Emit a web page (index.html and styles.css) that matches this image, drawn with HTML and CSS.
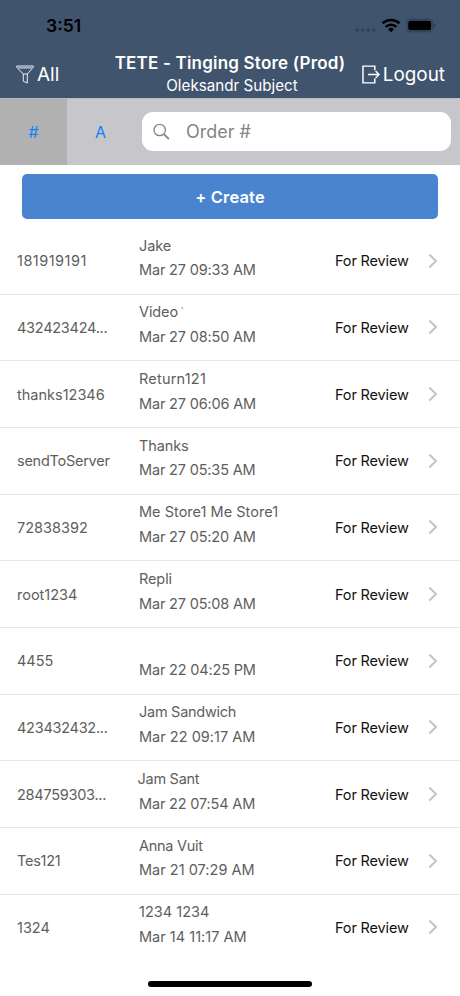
FILE: index.html
```html
<!DOCTYPE html>
<html lang="en">
<head>
<meta charset="utf-8">
<title>Orders</title>
<link rel="stylesheet" href="styles.css">
</head>
<body>
<div class="screen">
  <header class="header">
    <div class="status">
      <span class="time">3:51</span>
      <svg class="indicators" width="82" height="16" viewBox="0 0 82 16">
        <g fill="#2f4158"><circle cx="3.3" cy="12" r="1.7"/><circle cx="8.7" cy="12" r="1.7"/><circle cx="14.2" cy="12" r="1.7"/><circle cx="19.7" cy="12" r="1.7"/></g>
        <g fill="none" stroke="#000" stroke-width="2.4"><path d="M28.5 5.3a12.4 12.4 0 0 1 17 0"/><path d="M31.6 8.9a7.8 7.8 0 0 1 10.8 0"/></g>
        <path d="M34 11.2a4.4 4.4 0 0 1 6 0l-3 3z" fill="#000"/>
        <rect x="52.7" y="1.2" width="26" height="12.6" rx="3.8" fill="none" stroke="#2c3e55"/>
        <rect x="54.2" y="2.8" width="23" height="9.4" rx="2.3"/>
        <path d="M80 5.5c2 .6 2 3.6 0 4.200z" fill="#2c3e55"/>
      </svg>
    </div>
    <div class="nav">
      <div class="action filter">
        <svg width="18" height="19" viewBox="0 0 18 19" fill="none" stroke="#e6effa" stroke-width="1" stroke-linejoin="round"><path d="M.7 1h16.600v1.200L11.300 9v9l-4-1.700V9L.7 2.200zM2.200 2.900h13.600M7.300 9h4"/></svg>
        <span class="all">All</span>
      </div>
      <div class="titles">
        <div class="title"><span>TETE - Tinging Store (Prod)</span></div>
        <div class="subtitle"><span>Oleksandr Subject</span></div>
      </div>
      <div class="action logout">
        <svg width="19" height="19" viewBox="0 0 19 19" fill="none" stroke="#fff" stroke-width="1.500"><path d="M14 5.300V1H2v17h12v-4.500M7 9.500h11M14.800 6l3.500 3.500-3.500 3.500"/></svg>
        <span class="out">Logout</span>
      </div>
    </div>
  </header>
  <div class="toolbar">
    <div class="segment selected">#</div>
    <div class="segment">A</div>
    <div class="search">
      <svg width="18" height="18" viewBox="0 0 18 18" fill="none" stroke="#858585" stroke-width="1.300"><circle cx="6.700" cy="7" r="5.700"/><path d="M10.900 11.200l5 5" stroke-width="1.800"/></svg>
      <span class="placeholder">Order #</span>
    </div>
  </div>
  <div class="create"><span>+ Create</span></div>
  <main class="list">
    <div class="row"><span class="id ones">181919191</span><div class="info"><span>Jake</span><span>Mar 27 09:33 AM</span></div><span class="state">For Review</span><svg class="chevron" viewBox="0 0 10 16"><path d="M1.300 1.500L8 8l-6.700 6.500"/></svg></div>
    <div class="row"><span class="id cut">432423424...</span><div class="info"><span>Video <i class="tick">'</i></span><span>Mar 27 08:50 AM</span></div><span class="state">For Review</span><svg class="chevron" viewBox="0 0 10 16"><path d="M1.300 1.500L8 8l-6.700 6.500"/></svg></div>
    <div class="row"><span class="id">thanks12346</span><div class="info"><span class="wide">Return121</span><span>Mar 27 06:06 AM</span></div><span class="state">For Review</span><svg class="chevron" viewBox="0 0 10 16"><path d="M1.300 1.500L8 8l-6.700 6.500"/></svg></div>
    <div class="row"><span class="id cut">sendToServer</span><div class="info"><span>Thanks</span><span>Mar 27 05:35 AM</span></div><span class="state">For Review</span><svg class="chevron" viewBox="0 0 10 16"><path d="M1.300 1.500L8 8l-6.700 6.500"/></svg></div>
    <div class="row"><span class="id">72838392</span><div class="info"><span class="natural">Me Store1 Me Store1</span><span>Mar 27 05:20 AM</span></div><span class="state">For Review</span><svg class="chevron" viewBox="0 0 10 16"><path d="M1.300 1.500L8 8l-6.700 6.500"/></svg></div>
    <div class="row"><span class="id">root1234</span><div class="info"><span>Repli</span><span>Mar 27 05:08 AM</span></div><span class="state">For Review</span><svg class="chevron" viewBox="0 0 10 16"><path d="M1.300 1.500L8 8l-6.700 6.500"/></svg></div>
    <div class="row"><span class="id">4455</span><div class="info"><span></span><span>Mar 22 04:25 PM</span></div><span class="state">For Review</span><svg class="chevron" viewBox="0 0 10 16"><path d="M1.300 1.500L8 8l-6.700 6.500"/></svg></div>
    <div class="row"><span class="id cut">423432432...</span><div class="info"><span class="tight">Jam Sandwich</span><span class="natural">Mar 22 09:17 AM</span></div><span class="state">For Review</span><svg class="chevron" viewBox="0 0 10 16"><path d="M1.300 1.500L8 8l-6.700 6.500"/></svg></div>
    <div class="row"><span class="id cut">284759303...</span><div class="info"><span class="outdent tight">Jam Sant</span><span>Mar 22 07:54 AM</span></div><span class="state">For Review</span><svg class="chevron" viewBox="0 0 10 16"><path d="M1.300 1.500L8 8l-6.700 6.500"/></svg></div>
    <div class="row"><span class="id cut">Tes121</span><div class="info"><span class="tight">Anna Vuit</span><span class="natural">Mar 21 07:29 AM</span></div><span class="state">For Review</span><svg class="chevron" viewBox="0 0 10 16"><path d="M1.300 1.500L8 8l-6.700 6.500"/></svg></div>
    <div class="row"><span class="id">1324</span><div class="info"><span class="natural">1234 1234</span><span class="natural">Mar 14 11:17 AM</span></div><span class="state">For Review</span><svg class="chevron" viewBox="0 0 10 16"><path d="M1.300 1.500L8 8l-6.700 6.500"/></svg></div>
  </main>
  <div class="home"></div>
</div>
</body>
</html>
```
FILE: styles.css
```css
* { box-sizing: border-box; }
body { margin: 0; background: #fff; font-family: Inter, "Liberation Sans", sans-serif; }
.screen { width: 460px; height: 996px; overflow: hidden; display: flex; flex-direction: column; background: #fff; }
.header { height: 98px; flex: none; background: #40546e; color: #fff; }
.status { height: 50px; display: flex; justify-content: space-between; padding: 14px 22px 0 46px; }
.time { font-size: 17.5px; line-height: 24px; font-weight: 600; color: #000; }
.indicators { margin: 4px 2px 0 0; }
.nav { height: 48px; display: flex; padding-left: 16px; white-space: nowrap; }
.action { display: flex; align-items: center; height: 48px; font-size: 19px; gap: 3px; }
.filter { width: 94px; }
.logout { width: 84px; margin-left: 11px; font-size: 18.9px; letter-spacing: 0; }
.titles { width: 240px; text-align: center; }
.title { font-size: 17px; font-weight: 600; line-height: 22px; margin-top: 2px; letter-spacing: .2px; }
.subtitle { font-size: 15.2px; line-height: 23px; padding-left: 4px; }
.toolbar { height: 67px; flex: none; display: flex; align-items: center; background: #c7c7cb; border-top: 1px solid #b9bac0; }
.segment { width: 67px; height: 66px; line-height: 66px; text-align: center; font-size: 16px; color: #1580f5; }
.selected { background: #b1b1b2; }
.search { width: 309px; height: 39px; margin: 0 0 1px 8px; padding-left: 11px; border-radius: 11px; background: #fff; display: flex; align-items: center; gap: 15px; color: #858585; font-size: 18px; }
.create { flex: none; height: 45px; margin: 9px 22px; line-height: 46px; border-radius: 5px; background: #4a84d1; color: #fff; text-align: center; font-size: 16.5px; font-weight: 600; letter-spacing: .15px; }
.list { flex: none; }
.row { height: 66.67px; display: flex; align-items: center; padding-left: 17px; border-bottom: 1px solid #e6e6e6; color: #5e5e5e; font-size: 14.5px; white-space: nowrap; }
.row:last-child { border-bottom-color: transparent; }
.id { width: 122px; }
.ones { letter-spacing: .48px; }
.cut { letter-spacing: -.26px; }
.info { width: 196px; display: flex; flex-direction: column; padding-bottom: 5px; }
.info span { height: 24.5px; line-height: 24.5px; letter-spacing: -.17px; }
.info span:first-child { letter-spacing: -.1px; }
.info .tight:first-child { letter-spacing: -.27px; }
.info .wide:first-child { letter-spacing: .2px; }
.info span.natural { letter-spacing: .02px; }
.info .outdent { margin-left: -1.5px; }
.tick { font-size: 8px; line-height: 0; font-style: normal; vertical-align: 4px; margin-left: -1px; }
.state { width: 93px; color: #111; letter-spacing: -.15px; }
.chevron { width: 10px; height: 16px; fill: none; stroke: #c4c4c6; stroke-width: 2; }
.home { width: 164px; height: 6px; flex: none; margin: 20px auto 0; border-radius: 3px; background: #000; }
```
